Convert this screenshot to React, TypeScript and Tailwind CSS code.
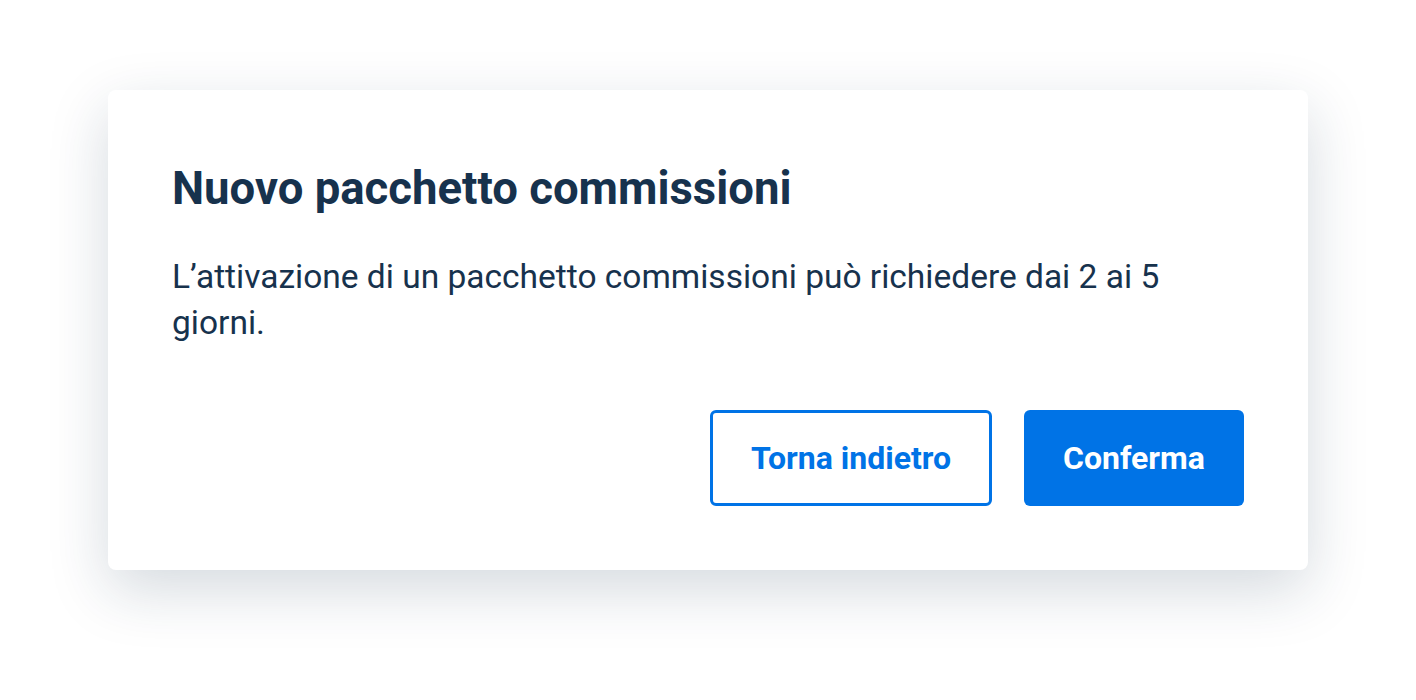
export default function App() {
  return (
    <div className="w-full h-[700px] bg-white pt-[90px] font-['Roboto',sans-serif] text-[#17324d]">
      <div className="mx-auto w-[1200px] h-[480px] bg-white rounded-lg shadow-[0_20px_60px_rgba(23,50,77,0.18)] px-16 pt-[75px] pb-16 flex flex-col">
        <h1 className="text-[45.5px] leading-[48px] font-bold">Nuovo pacchetto commissioni</h1>
        <p className="mt-[41px] text-[33.5px] leading-[46px]">
          L’attivazione di un pacchetto commissioni può richiedere dai 2 ai 5 giorni.
        </p>
        <div className="mt-auto flex justify-end gap-8">
          <button className="w-[282px] h-24 rounded-md border-[3px] border-[#0073e6] text-[#0073e6] text-[32px] font-bold">
            Torna indietro
          </button>
          <button className="w-[220px] h-24 rounded-md bg-[#0073e6] text-white text-[32px] font-bold">
            Conferma
          </button>
        </div>
      </div>
    </div>
  );
}
